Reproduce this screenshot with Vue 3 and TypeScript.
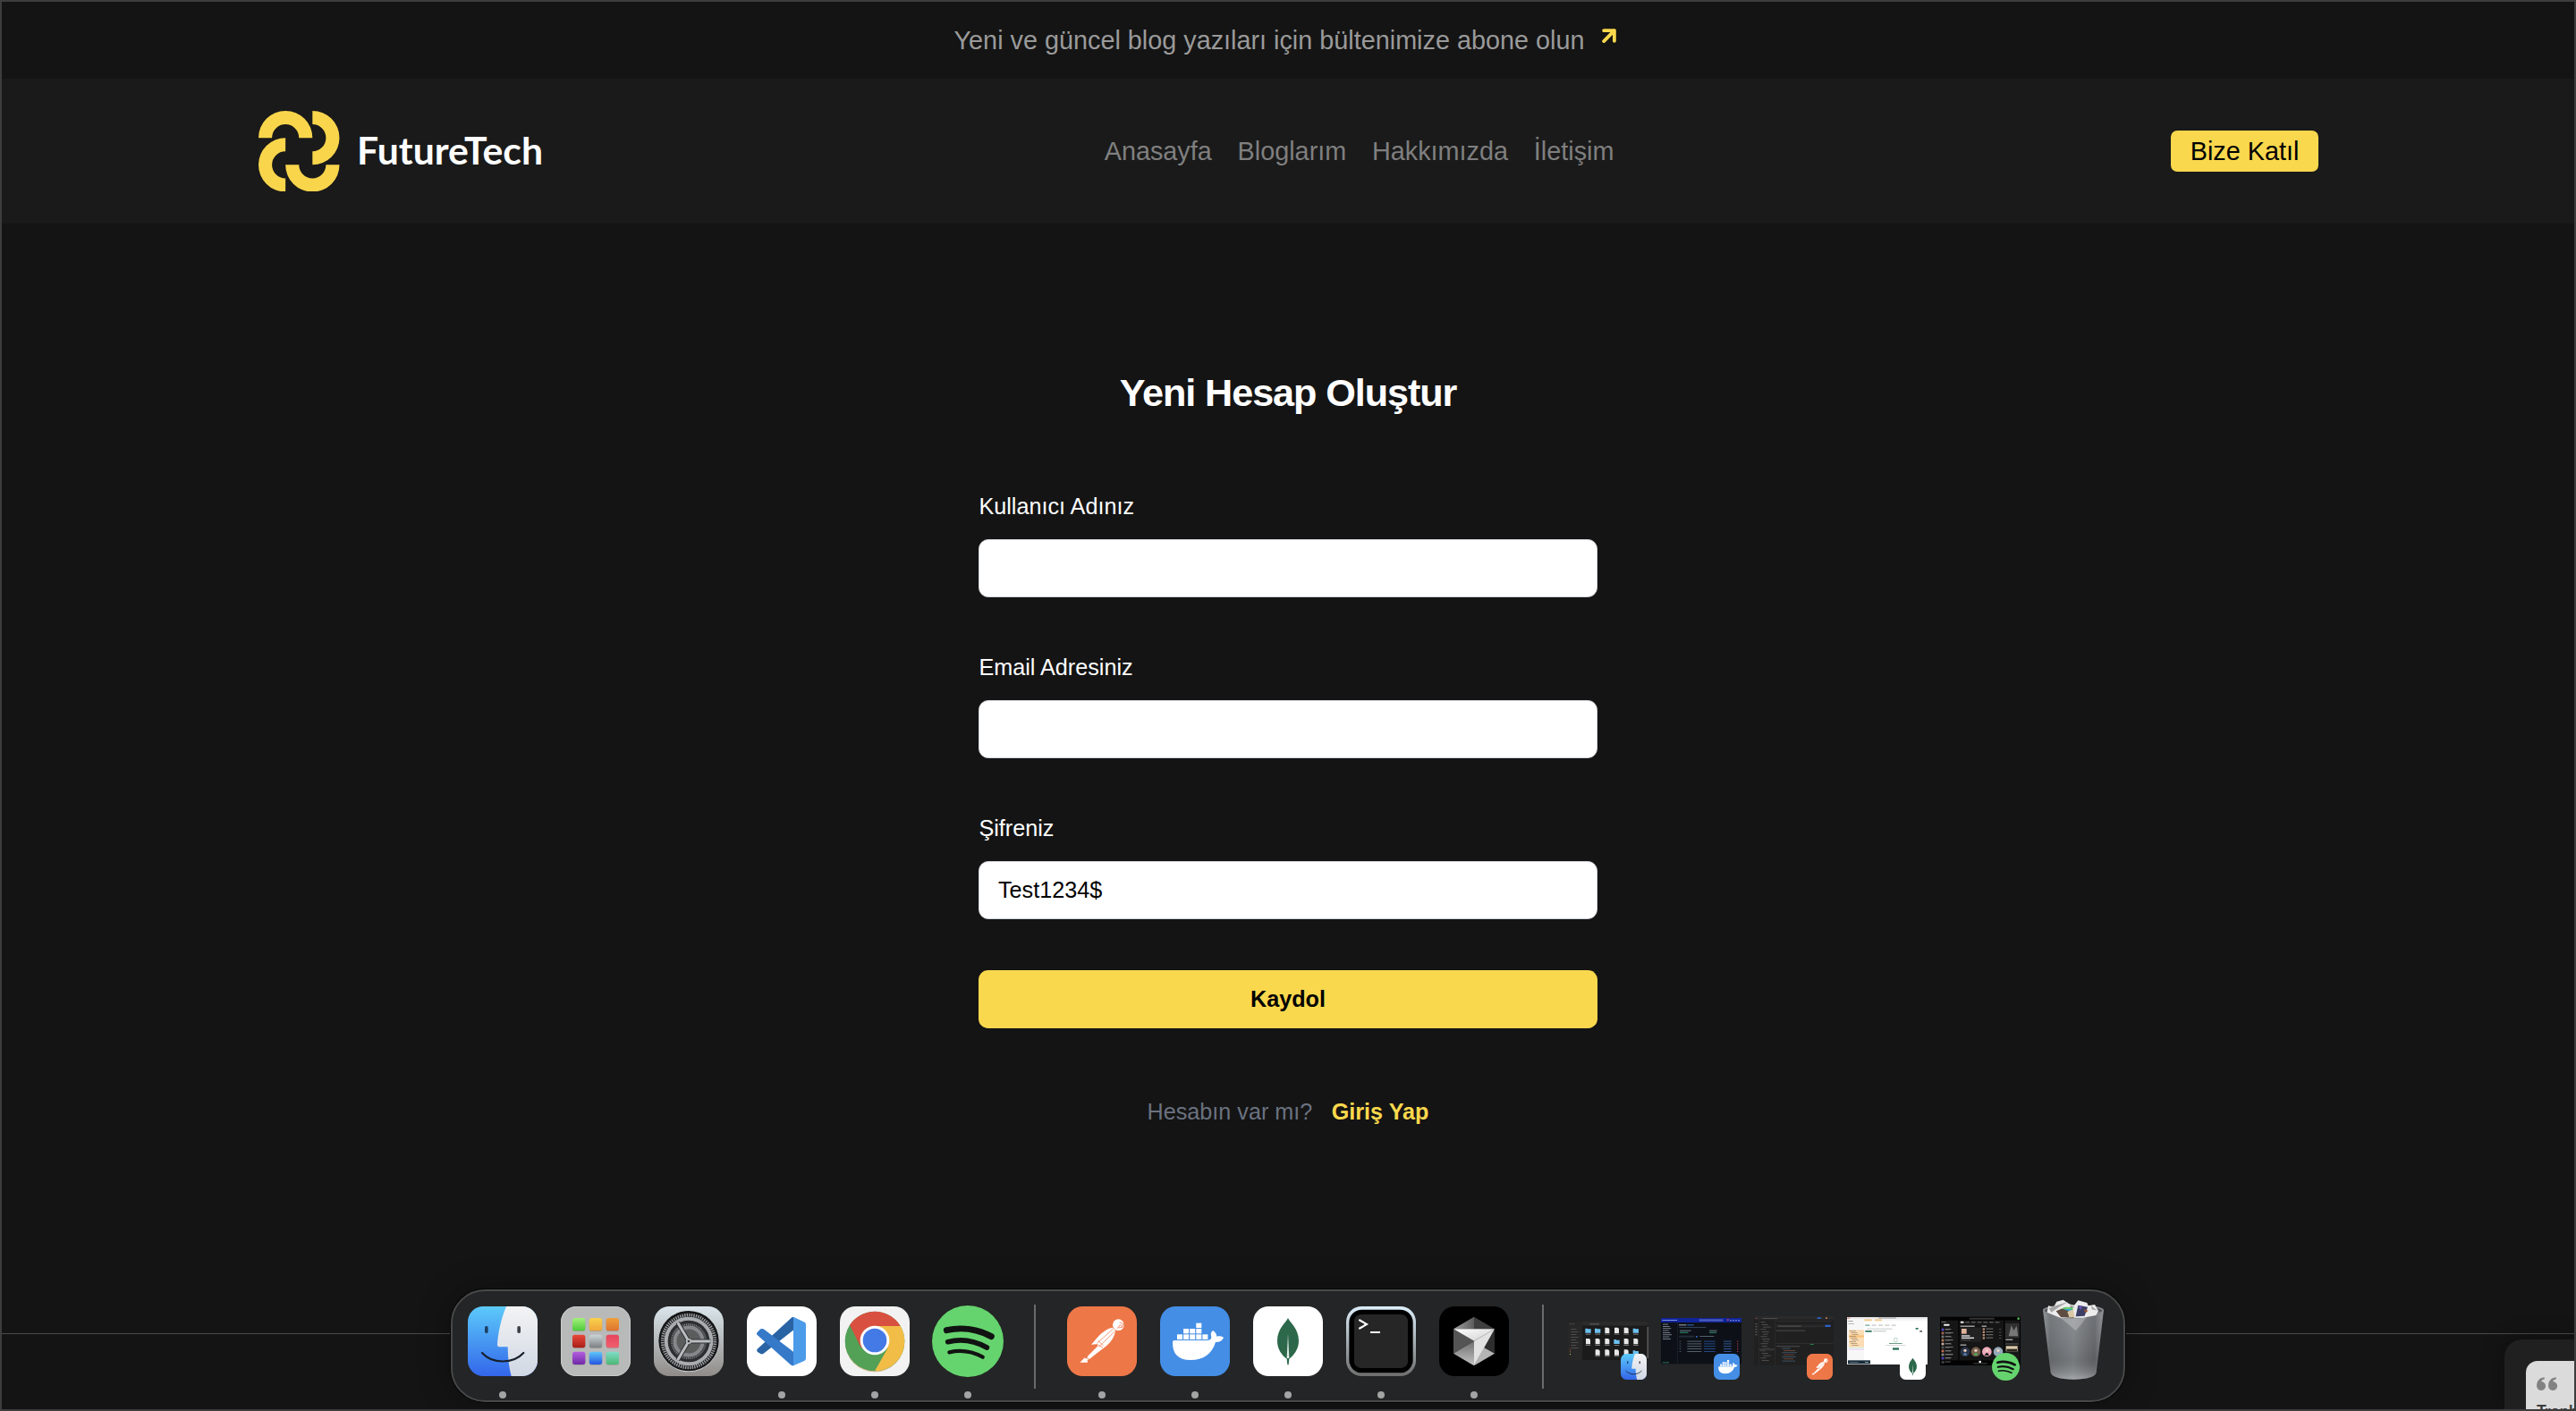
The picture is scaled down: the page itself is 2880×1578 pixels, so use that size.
<script setup lang="ts">
import { ref } from 'vue'

interface Field {
  id: string
  label: string
  value: string
}

interface DockApp {
  icon: string
  running: boolean
}

const links: string[] = ['Anasayfa', 'Bloglarım', 'Hakkımızda', 'İletişim']

const fields = ref<Field[]>([
  { id: 'username', label: 'Kullanıcı Adınız', value: '' },
  { id: 'email', label: 'Email Adresiniz', value: '' },
  { id: 'password', label: 'Şifreniz', value: 'Test1234$' },
])

const mainApps: DockApp[] = [
  { icon: 'finder', running: true },
  { icon: 'launchpad', running: false },
  { icon: 'settings', running: false },
  { icon: 'vscode', running: true },
  { icon: 'chrome', running: true },
  { icon: 'spotify', running: true },
]

const devApps: DockApp[] = [
  { icon: 'postman', running: true },
  { icon: 'docker', running: true },
  { icon: 'mongo', running: true },
  { icon: 'terminal', running: true },
  { icon: 'cursor', running: true },
]

const windows: string[] = ['finder', 'docker', 'postman', 'mongo', 'spotify']

const tiles = [
  ['#a4f27c', '#4fc93a'], ['#f9d24e', '#f0a63a'], ['#f0a03c', '#dd7430'],
  ['#e8483a', '#a81f18'], ['#ccd4d8', '#7c8082'], ['#e8455c', '#ef5f6c'],
  ['#b45fe0', '#7029a8'], ['#5fc8fa', '#2454e0'], ['#80dcc8', '#4cb874'],
]

const range = (n: number): number[] => Array.from({ length: n }, (_, i) => i)
</script>

<template>
  <div class="screen">
    <svg class="sprites" aria-hidden="true">
      <defs>
        <linearGradient id="gFinder" x1="0" y1="0" x2="0" y2="1"><stop offset="0" stop-color="#5ccafa" /><stop offset="1" stop-color="#3366ea" /></linearGradient>
        <linearGradient id="gFace" x1="0" y1="0" x2="0" y2="1"><stop offset="0" stop-color="#f3f3f4" /><stop offset="1" stop-color="#d0d8e4" /></linearGradient>
        <linearGradient id="gSettings" x1="0" y1="0" x2="0" y2="1"><stop offset="0" stop-color="#dae5eb" /><stop offset=".5" stop-color="#b4b9bb" /><stop offset="1" stop-color="#908c88" /></linearGradient>
        <linearGradient id="gMetal" x1="0" y1="0" x2="0" y2="1"><stop offset="0" stop-color="#dceefa" /><stop offset="1" stop-color="#6e6e6e" /></linearGradient>
        <linearGradient id="gBin" x1="0" y1="0" x2="1" y2="0"><stop offset="0" stop-color="#8b8f93" /><stop offset=".12" stop-color="#6e7276" /><stop offset=".5" stop-color="#83878b" /><stop offset=".85" stop-color="#66696d" /><stop offset="1" stop-color="#8c9094" /></linearGradient>
        <linearGradient id="gBinBase" x1="0" y1="0" x2="0" y2="1"><stop offset="0" stop-color="#fff" stop-opacity=".05" /><stop offset=".7" stop-color="#000" stop-opacity=".1" /><stop offset="1" stop-color="#fff" stop-opacity=".28" /></linearGradient>
        <linearGradient id="gCubeA" x1="0" y1="0" x2="1" y2="0"><stop offset="0" stop-color="#a2a2a2" /><stop offset="1" stop-color="#5c5c5c" /></linearGradient>
        <linearGradient id="gCubeB" x1="0" y1="0" x2="0" y2="1"><stop offset="0" stop-color="#6e6e6e" /><stop offset="1" stop-color="#c4c4c4" /></linearGradient>
        <linearGradient id="gCubeC" x1="0" y1="0" x2="1" y2="1"><stop offset="0" stop-color="#fff" /><stop offset="1" stop-color="#cfcfcf" /></linearGradient>
        <linearGradient v-for="(t, i) in tiles" :id="'gTile' + i" :key="i" x1="0" y1="0" x2="0" y2="1"><stop offset="0" :stop-color="t[0]" /><stop offset="1" :stop-color="t[1]" /></linearGradient>
        <clipPath id="squircle"><rect width="234" height="234" rx="52" /></clipPath>
      </defs>

      <symbol id="finder" viewBox="0 0 234 234">
        <g clip-path="url(#squircle)">
          <rect width="234" height="234" fill="url(#gFinder)" />
          <path d="M129 0C112 40 101 90 99 129Q99 136 106 136H134Q134 190 146 234H234V0Z" fill="url(#gFace)" />
        </g>
        <rect x="57" y="66" width="11" height="24" rx="5" fill="#1d3f63" />
        <rect x="166" y="66" width="11" height="24" rx="5" fill="#3c4046" />
        <path d="M48 156C82 194 152 194 187 156" fill="none" stroke="#17202c" stroke-width="6.5" stroke-linecap="round" />
      </symbol>

      <symbol id="launchpad" viewBox="0 0 234 234">
        <rect width="234" height="234" rx="52" fill="#b8b9b9" />
        <rect x="1.5" y="1.5" width="231" height="231" rx="51" fill="none" stroke="#c9cacb" stroke-width="3" />
        <g v-for="i in range(9)" :key="i">
          <rect :x="39 + (i % 3) * 56.5" :y="41 + Math.floor(i / 3) * 56.5" width="43" height="43" rx="8" fill="#8a8a8a" opacity=".6" />
          <rect :x="39 + (i % 3) * 56.5" :y="39 + Math.floor(i / 3) * 56.5" width="43" height="43" rx="8" :fill="`url(#gTile${i})`" />
        </g>
      </symbol>

      <symbol id="settings" viewBox="0 0 234 234">
        <rect width="234" height="234" rx="52" fill="url(#gSettings)" />
        <circle cx="117" cy="118" r="102" fill="#c9cbcb" />
        <circle cx="117" cy="116" r="101" fill="#161718" />
        <circle cx="117" cy="117" r="88" fill="none" stroke="#9fa3a5" stroke-width="11" stroke-dasharray="4.2 3.48" />
        <circle cx="117" cy="117" r="76" fill="#2c2e2f" stroke="#a9adaf" stroke-width="12" />
        <circle cx="117" cy="117" r="57" fill="none" stroke="#7c7f80" stroke-width="6" stroke-dasharray="3 2.6" />
        <circle cx="117" cy="117" r="47" fill="#6f7172" stroke="#85888a" stroke-width="12" />
        <circle cx="117" cy="117" r="40" fill="#5b5c5c" />
        <path d="M117 117H190M117 117L80 54M117 117L80 180" stroke="#303233" stroke-width="15" />
        <path d="M117 117H190M117 117L80 54M117 117L80 180" stroke="#b9bdbf" stroke-width="9" />
        <circle cx="117" cy="117" r="9" fill="#b9bdbf" /><circle cx="117" cy="117" r="4" fill="#333" />
      </symbol>

      <symbol id="vscode" viewBox="0 0 234 234">
        <rect width="234" height="234" rx="52" fill="#fff" />
        <path d="M152 36L35 143Q31 149 36 153L46 159Q52 162 58 157L158 78V37Z" fill="#2963a4" />
        <path d="M35 87L46 76Q52 73 58 77L158 154V198Q152 200 146 195L35 96Q31 91 35 87Z" fill="#3579c8" />
        <path d="M156 35L194 53Q198 56 198 61V174Q198 179 194 182L156 199Z" fill="#4b9be9" />
      </symbol>

      <symbol id="chrome" viewBox="0 0 234 234">
        <rect width="234" height="234" rx="52" fill="#f2f2f2" />
        <circle cx="117" cy="121" r="99" fill="#b98a3a" opacity=".55" />
        <circle cx="117" cy="117" r="100" fill="#53a057" />
        <path d="M117 66H203A100 100 0 0 1 117 217L160 141Z" fill="#f2bd46" />
        <path d="M33 63A100 100 0 0 1 203 66H117L72 140Z" fill="#d8503f" />
        <circle cx="117" cy="114" r="49" fill="#fff" />
        <circle cx="117" cy="114" r="40" fill="#447ae6" />
      </symbol>

      <symbol id="spotify" viewBox="0 0 240 240">
        <circle cx="120" cy="120" r="120" fill="#65d46e" />
        <g fill="none" stroke="#111312" stroke-linecap="round">
          <path d="M49 83C100 71 155 80 199 104" stroke-width="21" />
          <path d="M53 122C97 111 145 119 184 141" stroke-width="17" />
          <path d="M58 157C96 148 135 154 170 173" stroke-width="13" />
        </g>
      </symbol>

      <symbol id="postman" viewBox="0 0 234 234">
        <rect width="234" height="234" rx="52" fill="#ee7748" />
        <circle cx="172" cy="62" r="19" fill="#fff" />
        <path d="M176 53L190 60L186 68L178 62L168 74M186 70L172 72" fill="none" stroke="#ee7748" stroke-width="2.5" />
        <path d="M152 71L162 81C160 103 146 122 124 139L74 177L68 180L69 188L43 188L60 171L62 176L106 137L99 127L81 128L94 113C112 92 130 75 152 71Z" fill="#fff" />
        <path d="M68 168L104 132L114 142L76 176Z" fill="#fff" />
        <path d="M154 76L100 124M160 84L106 136M99 127L120 138M104 115L122 132M60 171L74 177" fill="none" stroke="#ee7748" stroke-width="2.2" />
      </symbol>

      <symbol id="docker" viewBox="0 0 234 234">
        <rect width="234" height="234" rx="52" fill="#448ee6" />
        <g fill="#fff">
          <rect v-for="i in range(5)" :key="i" :x="57 + i * 21.3" y="94" width="18" height="17" />
          <rect v-for="i in range(3)" :key="'m' + i" :x="78.3 + i * 21.3" y="75" width="18" height="16" />
          <rect x="120.9" y="56" width="18" height="16" />
          <path d="M42 120Q42 114 48 114H158Q176 113 171 99C169 91 172 85 177 81C185 86 190 93 190 101C198 98 208 100 213 104C208 116 198 120 186 120C174 160 145 180 102 180C60 180 41 158 42 120Z" />
        </g>
      </symbol>

      <symbol id="mongo" viewBox="0 0 234 234">
        <rect width="234" height="234" rx="52" fill="#fff" />
        <path d="M117 39C125 56 153 75 153 116C153 145 135 165 121 176L119 196H115L113 176C98 165 81 145 81 116C81 75 109 56 117 39Z" fill="#2d684b" />
        <path d="M117 92L121 174H113Z" fill="#e3ece6" />
      </symbol>

      <symbol id="terminal" viewBox="0 0 234 234">
        <rect width="234" height="234" rx="52" fill="url(#gMetal)" />
        <rect x="10" y="11" width="214" height="212" rx="43" fill="#000" />
        <rect x="27" y="27" width="180" height="180" rx="22" fill="#262627" />
        <path d="M43 45L69 60L43 75" fill="none" stroke="#fff" stroke-width="6.5" />
        <rect x="81" y="84" width="33" height="6" fill="#fff" />
      </symbol>

      <symbol id="cursor" viewBox="0 0 234 234">
        <rect width="234" height="234" rx="52" fill="#000" />
        <path d="M117 35L48 76H117Z" fill="url(#gCubeA)" />
        <path d="M117 35L186 76H117Z" fill="#3f3f3f" />
        <path d="M48 76V158L117 116Z" fill="#545454" />
        <path d="M48 158L117 116V199Z" fill="url(#gCubeB)" />
        <path d="M186 76V158L150 138Z" fill="#2e2e2e" />
        <path d="M117 199L186 158L150 138Z" fill="#b4b4b4" />
        <path d="M186 76L117 116V199Z" fill="#e2e2e2" />
        <path d="M48 76H186L117 116Z" fill="url(#gCubeC)" />
      </symbol>

      <symbol id="win-finder" viewBox="0 0 270 165">
        <rect y="17" width="268" height="130" fill="#1b1b1c" />
        <rect y="17" width="48" height="130" fill="#272728" />
        <rect x="48" y="17" width="220" height="15" fill="#2b2b2c" />
        <rect x="266" y="36" width="3" height="105" fill="#7a7a7a" />
        <circle v-for="i in range(3)" :key="'c' + i" :cx="7 + i * 6" cy="26" r="2" fill="#555" />
        <rect x="73" y="25" width="32" height="3" fill="#666" />
        <rect v-for="i in range(8)" :key="'s' + i" x="10" :y="42 + i * 9" :width="18 + (i * 7) % 14" height="2.5" fill="#555" />
        <rect x="6" y="110" width="3" height="3" fill="#c44" /><rect x="6" y="118" width="3" height="3" fill="#c83" /><rect x="6" y="126" width="3" height="3" fill="#cc4" />
        <g v-for="i in range(18)" :key="'f' + i">
          <template v-if="i !== 12">
            <path v-if="[0, 1, 5, 9, 17].includes(i)" :d="`M${58 + (i % 6) * 32} ${41 + Math.floor(i / 6) * 37}h7l2 2h10v13h-19z`" fill="#6cc0ee" />
            <path v-else :d="`M${60 + (i % 6) * 32} ${38 + Math.floor(i / 6) * 37}h11l4 4v15h-15z`" fill="#e8e8e8" />
            <rect :x="59 + (i % 6) * 32" :y="59 + Math.floor(i / 6) * 37" width="17" height="2.5" fill="#8b8b8b" />
          </template>
        </g>
      </symbol>

      <symbol id="win-docker" viewBox="0 0 270 165">
        <rect y="6" width="270" height="154" fill="#0d1117" />
        <rect y="6" width="270" height="15" fill="#10249a" />
        <rect x="4" y="12" width="50" height="3" fill="#8393d8" />
        <rect x="128" y="10" width="80" height="7" fill="#4d5fb8" />
        <rect x="222" y="10" width="5" height="5" fill="#e8445a" />
        <rect v-for="i in range(4)" :key="'d' + i" :x="232 + i * 9" y="12" width="4" height="4" fill="#9cacea" />
        <rect x="54" y="21" width="1.5" height="139" fill="#222a33" />
        <rect v-for="i in range(8)" :key="'s' + i" x="6" :y="26 + i * 7" :width="18 + (i * 5) % 13" height="2.5" fill="#8a929c" />
        <rect x="60" y="28" width="25" height="3" fill="#a7b0bb" /><rect x="88" y="28" width="22" height="3" fill="#3470c8" />
        <rect x="61" y="36" width="90" height="2.5" fill="#3b4c66" />
        <rect x="63" y="47" width="38" height="3" fill="#707a86" /><rect x="63" y="53" width="28" height="4" fill="#24735a" />
        <rect x="162" y="47" width="26" height="3" fill="#707a86" /><rect x="162" y="53" width="24" height="4" fill="#24735a" />
        <rect x="61" y="65" width="50" height="6" fill="#232c36" /><rect x="117" y="66" width="5" height="5" fill="#3470c8" /><rect x="130" y="66" width="48" height="3" fill="#56616e" />
        <g v-for="i in range(5)" :key="'r' + i">
          <rect x="62" :y="83 + i * 8.5" width="5" height="3" fill="#4a5563" />
          <rect x="88" :y="83 + i * 8.5" width="48" height="2.5" fill="#66707b" />
          <rect x="144" :y="83 + i * 8.5" width="38" height="2.5" fill="#2853a0" />
          <rect x="210" :y="83 + i * 8.5" width="26" height="2.5" fill="#3b66ad" />
          <rect x="255" :y="83 + i * 8.5" width="4" height="3" fill="#b83c4b" />
        </g>
        <rect x="5" y="154" width="22" height="3" fill="#24735a" />
      </symbol>

      <symbol id="win-postman" viewBox="0 0 270 165">
        <rect width="267" height="164" fill="#202021" />
        <rect width="267" height="11" fill="#2a2a2b" />
        <rect x="6" y="6" width="4" height="3" fill="#a04540" /><rect x="28" y="6" width="50" height="2.5" fill="#555" />
        <rect x="212" y="4" width="13" height="5" fill="#2f62c4" /><rect x="240" y="4" width="6" height="5" fill="#b97a4c" />
        <rect x="15" y="11" width="1.5" height="153" fill="#333" /><rect x="70" y="11" width="1.5" height="153" fill="#333" />
        <rect v-for="i in range(17)" :key="'s' + i" :x="22 + (i % 3) * 4" :y="19 + i * 8" :width="16 + (i * 5) % 12" height="2.5" fill="#565656" />
        <rect x="18" y="108" width="50" height="7" fill="#353535" />
        <rect v-for="i in range(5)" :key="'t' + i" x="3" :y="24 + i * 9" width="9" height="4" fill="#484848" />
        <rect x="75" y="15" width="185" height="2" fill="#373737" />
        <rect x="75" y="29" width="160" height="8" fill="#2b2b2d" /><rect x="80" y="32" width="78" height="2.5" fill="#626262" />
        <rect x="238" y="29" width="19" height="7" fill="#2f62c4" />
        <rect x="75" y="47" width="97" height="2.5" fill="#545454" />
        <rect x="75" y="90" width="190" height="2" fill="#363636" />
        <rect x="188" y="93" width="12" height="3" fill="#28814f" /><rect x="75" y="100" width="80" height="2.5" fill="#555" />
        <rect v-for="i in range(7)" :key="'j' + i" :x="94 + (i % 2) * 5" :y="107 + i * 7" :width="28 + (i * 11) % 25" height="2.5" :fill="i % 2 ? '#744d3d' : '#425b6f'" />
      </symbol>

      <symbol id="win-mongo" viewBox="0 0 270 165">
        <rect y="3" width="270" height="159" fill="#fff" />
        <rect y="3" width="270" height="6" fill="#e9e9ea" /><rect x="105" y="5" width="60" height="2" fill="#777" />
        <rect x="1" y="5" width="9" height="3" fill="#de796a" />
        <rect x="57" y="9" width="213" height="7" fill="#f5f6f7" />
        <rect x="58" y="10" width="25" height="6" fill="#f5cd91" /><rect x="93" y="10" width="24" height="6" fill="#f5cd91" />
        <rect y="9" width="57" height="153" fill="#f7f7f7" />
        <rect x="6" y="46" width="51" height="58" fill="#fbdcb4" /><rect x="6" y="64" width="51" height="7" fill="#f9c27b" /><rect x="6" y="104" width="51" height="5" fill="#daf0dc" /><rect x="6" y="109" width="51" height="5" fill="#ebdef6" />
        <rect v-for="i in range(9)" :key="'s' + i" :x="8 + (i % 3) * 4" :y="49 + i * 6" width="22" height="2" fill="#9a8260" />
        <rect x="4" y="15" width="16" height="2" fill="#777" /><rect x="4" y="25" width="20" height="2" fill="#999" />
        <rect v-for="i in range(5)" :key="'t' + i" :x="61 + i * 22" :y="29" width="15" height="2.5" :fill="i ? '#aaa' : '#28705a'" />
        <rect x="66" y="41" width="86" height="3" fill="#c6ccce" /><rect x="230" y="39" width="9" height="5" fill="#28705a" />
        <rect x="61" y="48" width="22" height="5" fill="#28705a" /><rect x="87" y="48" width="44" height="4" fill="#c7d2cd" /><rect x="244" y="48" width="8" height="5" fill="#555" />
        <path d="M158 73h10v13h-10z" fill="none" stroke="#8bb5a0" stroke-width="1.5" />
        <rect x="141" y="90" width="44" height="3" fill="#6a9f86" /><rect x="129" y="96" width="68" height="2" fill="#c9c9c9" /><rect x="153" y="106" width="21" height="7" fill="#28705a" />
        <rect x="3" y="148" width="75" height="12" fill="#152b38" /><rect x="8" y="153" width="30" height="2" fill="#788894" /><rect x="60" y="153" width="12" height="2" fill="#d6e0e6" />
      </symbol>

      <symbol id="win-spotify" viewBox="0 0 270 165">
        <rect y="2" width="270" height="163" fill="#030303" />
        <rect x="3" y="14" width="58" height="134" fill="#161616" /><rect x="65" y="14" width="148" height="134" fill="#151515" /><rect x="217" y="14" width="50" height="134" fill="#181818" />
        <rect x="98" y="5" width="85" height="6" rx="3" fill="#333" /><circle cx="263" cy="8" r="4" fill="#52b95c" />
        <rect x="68" y="17" width="12" height="6" rx="3" fill="#eee" />
        <rect v-for="i in range(6)" :key="'p' + i" :x="85 + i * 20" y="19" width="14" height="3" fill="#757575" />
        <rect x="12" y="26" width="20" height="6" rx="3" fill="#eee" /><rect x="5" y="19" width="15" height="2" fill="#999" />
        <g v-for="i in range(9)" :key="'l' + i">
          <rect x="5" :y="41 + i * 12" width="8" height="8" :fill="['#5a48ca', '#a86952', '#777', '#b07a52', '#cbb3a3', '#555', '#c46d52', '#888', '#4a3cc0'][i]" />
          <rect x="17" :y="42 + i * 12" :width="20 + (i * 7) % 14" height="2.5" fill="#8a8a8a" />
          <rect x="17" :y="46 + i * 12" :width="14 + (i * 5) % 12" height="2" fill="#4e4e4e" />
        </g>
        <rect x="68" y="32" width="48" height="3" fill="#ddd" /><rect x="140" y="32" width="16" height="3" fill="#ddd" />
        <rect x="68" y="38" width="70" height="48" fill="#222" /><rect x="72" y="42" width="17" height="17" fill="#e0b49b" />
        <rect x="72" y="64" width="28" height="4" fill="#eee" /><rect x="72" y="71" width="42" height="4" fill="#eee" /><rect x="72" y="79" width="30" height="2" fill="#666" />
        <g v-for="i in range(4)" :key="'q' + i"><rect x="143" :y="40 + i * 10" width="7" height="7" fill="#b78d77" /><rect x="154" :y="41 + i * 10" width="24" height="2.5" fill="#8a8a8a" /><rect x="198" :y="43 + i * 10" width="7" height="2" fill="#666" /></g>
        <rect x="68" y="95" width="20" height="3" fill="#ddd" />
        <circle cx="84" cy="119" r="16" fill="#29354a" /><circle cx="120" cy="119" r="16" fill="#765f4c" /><circle cx="157" cy="119" r="16" fill="#f0a9bd" /><circle cx="195" cy="119" r="16" fill="#93a9b8" />
        <g fill="#ead0bd"><circle cx="84" cy="115" r="5" /><circle cx="120" cy="115" r="5" /><circle cx="157" cy="115" r="5" /><circle cx="195" cy="115" r="5" /></g>
        <path d="M149 132q8-20 16 0z" fill="#222" /><path d="M77 131q7-18 14 0z" fill="#5b7cae" /><path d="M113 131q7-18 14 0z" fill="#4ca85a" />
        <rect x="219" y="24" width="46" height="48" fill="#303030" /><path d="M230 67l9-37 8 18 10-16 5 35z" fill="#777" />
        <rect x="220" y="77" width="24" height="3" fill="#ddd" /><rect x="219" y="92" width="44" height="2" fill="#777" /><rect x="221" y="100" width="39" height="18" fill="#d8c9a8" /><rect x="223" y="110" width="35" height="8" fill="#2b2520" />
        <circle cx="134" cy="153" r="4" fill="#fff" /><rect x="112" y="158" width="46" height="1.5" fill="#888" /><rect x="5" y="150" width="9" height="9" fill="#3c3c3c" /><rect x="17" y="152" width="18" height="2" fill="#888" />
      </symbol>

      <symbol id="trash" viewBox="0 0 208 270">
        <path d="M2 36Q104 62 206 36L181 246Q176 268 104 269Q34 268 28 246Z" fill="url(#gBin)" />
        <path d="M2 36Q104 62 206 36L181 246Q176 268 104 269Q34 268 28 246Z" fill="url(#gBinBase)" />
        <ellipse cx="104" cy="36" rx="102" ry="18" fill="#8a8e92" />
        <ellipse cx="104" cy="38" rx="97" ry="15" fill="#55585b" />
        <path d="M16 44L20 22L38 26L48 8L70 2L88 14L106 22L120 4L150 12L154 22L176 18L188 40L180 54L136 62L60 62Z" fill="#ececec" />
        <path d="M22 30L44 22L88 8L60 24L30 44ZM92 18L108 26L96 32ZM164 22L184 38L166 34Z" fill="#a5a5a5" />
        <path d="M46 40L74 28L100 26L106 62L62 60Z" fill="#5f4c42" />
        <path d="M62 32L80 26L102 28L104 36L84 34Z" fill="#62d069" /><path d="M70 33L96 33L104 38L104 44Z" fill="#3ba6e0" />
        <path d="M84 42L104 34L108 60L90 60Z" fill="#dbc9a5" />
        <path d="M120 20L152 26L142 56L112 58Z" fill="#3b3f66" /><path d="M120 24L134 22L130 36Z" fill="#6d56b0" /><path d="M138 34L154 38L146 46Z" fill="#a85433" />
        <path d="M60 62Q106 68 148 60Q130 88 112 106Q90 84 60 62Z" fill="#fff" opacity=".25" />
      </symbol>
    </svg>

    <div class="banner">
      <span>Yeni ve güncel blog yazıları için bültenimize abone olun</span>
      <svg class="arrow" viewBox="0 0 15 15"><path d="M2 2H13V13M13 2L2 13.2" fill="none" stroke="#fad84c" stroke-width="3.6" stroke-linecap="round" stroke-linejoin="round" /></svg>
    </div>

    <header class="nav">
      <a class="logo">
        <svg class="mark" viewBox="0 0 90 90" fill="#f9d54c">
          <path d="M0 30A30 30 0 0 1 60 30H45A15 15 0 0 0 15 30Z" />
          <path d="M60 0A30 30 0 0 1 60 60V45A15 15 0 0 0 60 15Z" />
          <path d="M90 60A30 30 0 0 1 30 60H45A15 15 0 0 0 75 60Z" />
          <path d="M30 90A30 30 0 0 1 30 30V45A15 15 0 0 0 30 75Z" />
        </svg>
        <svg class="word" viewBox="0 0 212 60"><text x="0" y="44.5" textLength="208" lengthAdjust="spacingAndGlyphs">FutureTech</text></svg>
      </a>
      <nav class="links"><a v-for="l in links" :key="l">{{ l }}</a></nav>
      <a class="join">Bize Katıl</a>
    </header>

    <main class="main">
      <h2>Yeni Hesap Oluştur</h2>
      <form class="form" @submit.prevent>
        <div v-for="f in fields" :key="f.id" class="field">
          <label :for="f.id">{{ f.label }}</label>
          <input :id="f.id" v-model="f.value" type="text" autocomplete="off" />
        </div>
        <button type="submit">Kaydol</button>
      </form>
      <p class="signin">Hesabın var mı? <a>Giriş Yap</a></p>
    </main>
    <footer class="footer"></footer>

    <aside class="peek">
      <div class="card">
        <svg class="quotes" viewBox="0 0 24 15" fill="#828282">
          <path d="M8.5 0.3L9 2.2C6.8 2.7 5.6 3.6 5.3 5A5 5 0 1 1 0.1 9.6C0 4.5 3.2 1 8.5 .3Z" />
          <path d="M21.5 .3L22 2.2C19.8 2.7 18.6 3.6 18.3 5A5 5 0 1 1 13.1 9.6C13 4.5 16.2 1 21.5 .3Z" />
        </svg>
        <p>Trophy</p>
      </div>
    </aside>

    <div class="dock">
      <div v-for="a in mainApps" :key="a.icon" class="slot">
        <svg :class="['icon', { round: a.icon === 'spotify' }]"><use :href="'#' + a.icon" /></svg>
        <i v-if="a.running" class="dot"></i>
      </div>
      <div class="gap"><i></i></div>
      <div v-for="a in devApps" :key="a.icon" class="slot">
        <svg class="icon"><use :href="'#' + a.icon" /></svg>
        <i v-if="a.running" class="dot"></i>
      </div>
      <div class="gap second"><i></i></div>
      <div v-for="w in windows" :key="w" class="slot">
        <svg class="window"><use :href="'#win-' + w" /></svg>
        <svg :class="['badge', { round: w === 'spotify' }]"><use :href="'#' + w" /></svg>
      </div>
      <div class="slot"><svg class="trash"><use href="#trash" /></svg></div>
    </div>
  </div>
</template>

<style>
body {
  margin: 0;
  background: #141414;
}
</style>

<style scoped>
.screen {
  position: relative;
  box-sizing: border-box;
  width: 100%;
  height: 1578px;
  overflow: hidden;
  border: 2px solid #3d3d3d;
  background: #141414;
  font-family: "Liberation Sans", Arial, Helvetica, sans-serif;
  font-size: 28.8px;
  line-height: 43.2px;
  display: flex;
  flex-direction: column;
}
.sprites {
  position: absolute;
  width: 0;
  height: 0;
}
.banner {
  flex: none;
  box-sizing: border-box;
  height: 86px;
  padding-top: 2px;
  display: flex;
  align-items: center;
  justify-content: center;
  color: #9a9a9a;
}
.arrow {
  width: 16px;
  height: 16px;
  margin: 0 6px 13px 20px;
}
.nav {
  flex: none;
  height: 162px;
  padding: 0 286px;
  background: #1a1a1a;
  display: flex;
  align-items: center;
  justify-content: space-between;
}
.logo {
  width: 324px;
  display: flex;
  align-items: center;
}
.mark {
  width: 90.5px;
  height: 90.5px;
  margin-left: 1.3px;
}
.word {
  width: 212px;
  height: 60px;
  margin-left: 19px;
}
.word text {
  font: 700 41.5px Lato, sans-serif;
  fill: #fff;
}
.links {
  padding-top: 1px;
  display: flex;
  gap: 28.8px;
  color: #7f7f7f;
}
.join {
  padding: 2.8px 21.6px 0.8px;
  border-radius: 7.2px;
  background: #fad84d;
  color: #000;
}
.main {
  flex: none;
  box-sizing: border-box;
  height: 1241px;
  padding-top: 157.2px;
  display: flex;
  flex-direction: column;
  align-items: center;
}
h2 {
  margin: 0 0 73.3px;
  font-size: 43.2px;
  line-height: 64.8px;
  font-weight: 700;
  letter-spacing: -1.08px;
  color: #fff;
}
.form {
  width: 691.2px;
  display: flex;
  flex-direction: column;
  gap: 57.6px;
}
.field {
  display: flex;
  flex-direction: column;
  gap: 14.4px;
}
label {
  font-size: 25.2px;
  color: #fff;
}
input {
  box-sizing: border-box;
  height: 64.8px;
  padding: 0 20.6px;
  border: 1px solid #d1d5db;
  border-radius: 10.8px;
  background: #fff;
  color: #000;
  font: 25.2px "Liberation Sans", Arial, sans-serif;
  outline: 0;
}
button {
  height: 64.8px;
  padding: 0;
  border: 0;
  border-radius: 10.8px;
  background: #fad84d;
  color: #000;
  font: 700 25.2px "Liberation Sans", Arial, sans-serif;
}
.signin {
  margin: 72px 0 0;
  font-size: 25.2px;
  color: #6b7280;
}
.signin a {
  margin-left: 14.4px;
  font-weight: 700;
  color: #fad84d;
}
.footer {
  flex: 1;
  border-top: 1px solid #4a4a4a;
}
.peek {
  position: absolute;
  right: -2px;
  bottom: -2px;
  box-sizing: border-box;
  width: 80px;
  height: 80px;
  padding: 24px 0 0 24px;
  overflow: hidden;
  border-radius: 20px 0 0 0;
  background: #202020;
  box-shadow: 0 0 24px rgba(0, 0, 0, 0.35);
}
.card {
  height: 60px;
  padding: 18px 0 0 12px;
  border-radius: 13px 0 0 0;
  background: #dbdbdb;
}
.quotes {
  display: block;
  width: 24px;
  height: 15px;
}
.card p {
  margin: 11px 0 0;
  font: 700 18px/24px Lato, sans-serif;
  color: #3c3c3c;
  white-space: nowrap;
}
.dock {
  position: absolute;
  left: 502px;
  top: 1440px;
  box-sizing: border-box;
  width: 1872px;
  height: 126px;
  padding: 0 4px;
  border: 2px solid #474848;
  border-radius: 38px;
  background: #242526;
  box-shadow: 0 0 0 1px #060606, 0 0 36px rgba(0, 0, 0, 0.3);
  display: flex;
  align-items: stretch;
}
.slot {
  position: relative;
  flex: none;
  width: 104px;
  display: flex;
  flex-direction: column;
  align-items: center;
}
.icon {
  width: 78px;
  height: 78px;
  margin-top: 17px;
}
.icon.round {
  width: 80px;
  height: 80px;
  margin-top: 16px;
}
.dot {
  width: 8px;
  height: 8px;
  margin-top: 17px;
  border-radius: 50%;
  background: #a4a4a4;
}
.round + .dot {
  margin-top: 16px;
}
.gap {
  flex: none;
  width: 46px;
  display: flex;
  align-items: center;
  justify-content: center;
}
.gap i {
  width: 2px;
  height: 94px;
  margin-top: 1px;
  background: #6a6b6b;
}
.gap.second i {
  margin-left: 4px;
}
.window {
  width: 90px;
  height: 55px;
  margin-top: 28px;
}
.badge {
  position: absolute;
  left: 66px;
  top: 70px;
  width: 29px;
  height: 29px;
}
.badge.round {
  left: 65px;
  top: 69px;
  width: 31px;
  height: 31px;
}
.trash {
  width: 70px;
  height: 90px;
  margin-top: 9px;
}
</style>
